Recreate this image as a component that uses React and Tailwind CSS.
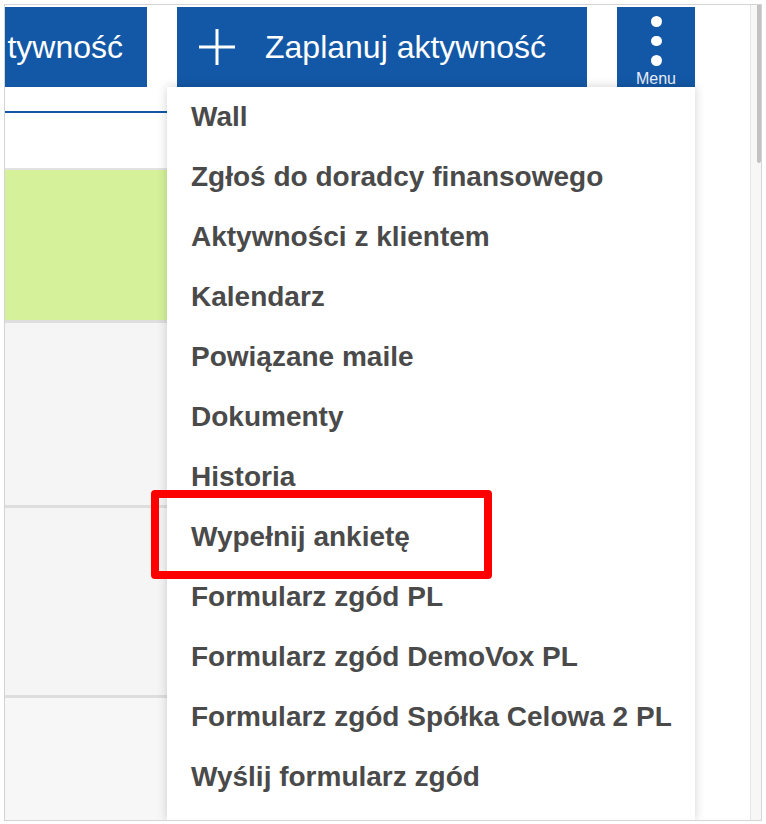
import React from "react";

const items = [
  "Wall",
  "Zgłoś do doradcy finansowego",
  "Aktywności z klientem",
  "Kalendarz",
  "Powiązane maile",
  "Dokumenty",
  "Historia",
  "Wypełnij ankietę",
  "Formularz zgód PL",
  "Formularz zgód DemoVox PL",
  "Formularz zgód Spółka Celowa 2 PL",
  "Wyślij formularz zgód",
];

function PlusIcon() {
  return (
    <svg width="36" height="36" viewBox="0 0 36 36" className="shrink-0">
      <path d="M18 0V36M0 18H36" stroke="white" strokeWidth="3" />
    </svg>
  );
}

function Toolbar() {
  return (
    <div className="flex mt-[2px] h-[80px] gap-[30px]">
      <div className="w-[142px] h-full bg-[#1358a6] flex items-center justify-end pr-[24px]">
        <span className="text-white text-[32px] whitespace-nowrap">tywność</span>
      </div>
      <div className="w-[410px] h-full bg-[#1358a6] flex items-center pl-[22px] gap-[30px]">
        <PlusIcon />
        <span className="text-white text-[32px] whitespace-nowrap">Zaplanuj aktywność</span>
      </div>
      <div className="w-[78px] h-full bg-[#1358a6] flex flex-col items-center pt-[9px]">
        <div className="w-[11px] h-[11px] rounded-full bg-white" />
        <div className="w-[11px] h-[11px] rounded-full bg-white mt-[9px]" />
        <div className="w-[11px] h-[11px] rounded-full bg-white mt-[9px]" />
        <span className="text-[#e8eef7] text-[16px] leading-none mt-[5px]">Menu</span>
      </div>
    </div>
  );
}

function Dropdown() {
  return (
    <div className="absolute left-[162px] top-[82px] w-[528px] bottom-0 bg-white shadow-[0_0_10px_rgba(0,0,0,0.18)] z-10">
      <ul className="flex flex-col">
        {items.map((item) => (
          <li
            key={item}
            className="h-[60px] leading-[60px] pl-[24px] text-[28px] font-bold text-[#4a4a4a] whitespace-nowrap"
          >
            {item}
          </li>
        ))}
      </ul>
    </div>
  );
}

export default function App() {
  return (
    <div className="w-[766px] h-[824px] bg-white p-[4px] font-['Liberation_Sans',Arial,sans-serif]">
      <div className="w-[758px] h-[817px] border border-[#d4d4d4] flex">
        <div className="relative flex-1 h-full overflow-hidden">
          <Toolbar />
          <div className="w-[162px] h-[26px] border-b-2 border-[#1358a6]" />
          <div className="w-[400px] h-[55px]" />
          <div className="w-[400px] h-[2px] bg-[#e2e2e2]" />
          <div className="w-[400px] h-[150px] bg-[#d5f29a]" />
          <div className="w-[400px] h-[3px] bg-[#dedede]" />
          <div className="w-[400px] h-[182px] bg-[#f5f5f5]" />
          <div className="w-[400px] h-[3px] bg-[#dedede]" />
          <div className="w-[400px] h-[187px] bg-[#f5f5f5]" />
          <div className="w-[400px] h-[3px] bg-[#dedede]" />
          <div className="w-[400px] h-[200px] bg-[#f7f7f7]" />
          <Dropdown />
          <div className="absolute left-[146px] top-[485px] w-[341px] h-[89px] border-[8px] border-[#ff0000] rounded-[4px] z-20" />
        </div>
        <div className="w-[11px] h-full bg-[#f7f7f7] border-l border-[#e6e6e6] flex justify-end">
          <div className="w-[4px] h-[158px] bg-[#c2c2c2] rounded-b-[2px]" />
        </div>
      </div>
    </div>
  );
}
